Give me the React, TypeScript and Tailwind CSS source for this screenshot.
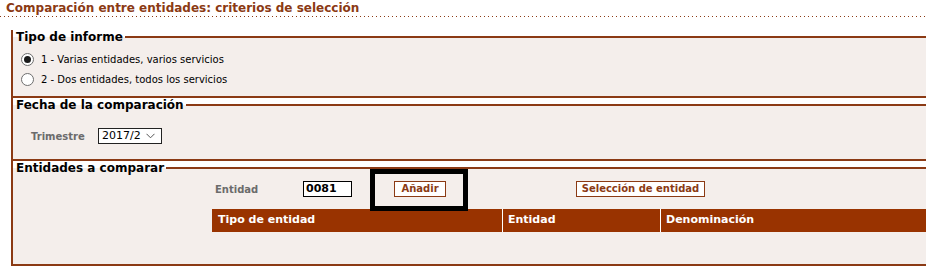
import React from "react";

function Legend({ children }: { children: React.ReactNode }) {
  return (
    <div className="flex items-center h-[14px] bg-[linear-gradient(to_bottom,#ffffff_50%,#f4eeeb_50%)]">
      <span className="pl-[3px] pr-[2px] text-[12px] leading-[14px] font-bold text-black whitespace-nowrap">{children}</span>
      <div className="flex-1 h-[2px] bg-[#8b3a14]" />
    </div>
  );
}

function Radio({ checked }: { checked?: boolean }) {
  return (
    <div className="w-[13px] h-[13px] rounded-full border border-[#6e6e6e] bg-white flex items-center justify-center shrink-0">
      {checked && <div className="w-[7px] h-[7px] rounded-full bg-[#1a1a1a]" />}
    </div>
  );
}

export default function App() {
  return (
    <div className="relative w-[926px] h-[271px] overflow-hidden bg-white font-['DejaVu_Sans',Verdana,sans-serif]">
      <div className="h-[16px] pl-[6px] text-[12px] leading-[16px] font-bold text-[#8b3a14] whitespace-nowrap">
        Comparación entre entidades: criterios de selección
      </div>
      <div className="h-[1px] bg-[repeating-linear-gradient(to_right,#8b3a14_0px,#8b3a14_1px,transparent_1px,transparent_4px)]" />

      {/* Fieldset 1 */}
      <div className="mt-[13px] ml-[11px] border-l-2 border-b-2 border-[#8b3a14] bg-[#f4eeeb]">
        <Legend>Tipo de informe</Legend>
        <div className="pt-[5px] pb-[7px] pl-[8px]">
          <div className="flex items-center h-[20px] gap-[7px]">
            <Radio checked />
            <span className="text-[10px] text-black whitespace-nowrap">1 - Varias entidades, varios servicios</span>
          </div>
          <div className="flex items-center h-[20px] gap-[7px]">
            <Radio />
            <span className="text-[10px] text-black whitespace-nowrap">2 - Dos entidades, todos los servicios</span>
          </div>
        </div>
      </div>

      {/* Fieldset 2 */}
      <div className="ml-[11px] border-l-2 border-b-2 border-[#8b3a14] bg-[#f4eeeb]">
        <Legend>Fecha de la comparación</Legend>
        <div className="pt-[16px] pb-[15px] pl-[18px] flex items-center h-[47px]">
          <span className="w-[67px] text-[10px] font-bold text-[#6b6b6b]">Trimestre</span>
          <div className="w-[64px] h-[16px] border border-[#222] bg-white flex items-center justify-between pl-[3px] pr-[6px]">
            <span className="text-[11px] leading-[14px] text-black">2017/2</span>
            <svg width="9" height="6" viewBox="0 0 9 6" fill="none">
              <path d="M0.5 0.8 L4.5 4.8 L8.5 0.8" stroke="#555" strokeWidth="1" />
            </svg>
          </div>
        </div>
      </div>

      {/* Fieldset 3 */}
      <div className="ml-[11px] border-l-2 border-b-2 border-[#8b3a14] bg-[#f4eeeb]">
        <Legend>Entidades a comparar</Legend>
        <div className="pt-[6px] pb-[32px]">
          <div className="flex items-center h-[16px] pl-[202px]">
            <span className="w-[88px] text-[10px] font-bold text-[#6b6b6b]">Entidad</span>
            <div className="w-[49px] h-[16px] border border-black bg-white flex items-center pl-[2px]">
              <span className="text-[11px] font-bold text-black leading-[14px]">0081</span>
            </div>
            <div className="ml-[42px] w-[52px] h-[16px] border border-[#8b3a14] bg-white flex items-center justify-center">
              <span className="text-[10px] font-bold text-[#8b3a14] leading-[14px]">Añadir</span>
            </div>
            <div className="ml-[130px] w-[129px] h-[16px] border border-[#8b3a14] bg-white flex items-center justify-center">
              <span className="text-[10px] font-bold text-[#8b3a14] leading-[14px] whitespace-nowrap">Selección de entidad</span>
            </div>
          </div>
          <div className="mt-[12px] ml-[199px] h-[23px] bg-[#993300] flex text-white text-[11px] font-bold">
            <div className="w-[291px] shrink-0 border-r border-white flex items-center pl-[6px]">Tipo de entidad</div>
            <div className="w-[158px] shrink-0 border-r border-white flex items-center pl-[5px]">Entidad</div>
            <div className="flex-1 flex items-center pl-[5px]">Denominación</div>
          </div>
        </div>
      </div>

      {/* highlight box */}
      <div className="absolute left-[370px] top-[169px] w-[98px] h-[42px] border-[5px] border-black pointer-events-none" />
    </div>
  );
}
